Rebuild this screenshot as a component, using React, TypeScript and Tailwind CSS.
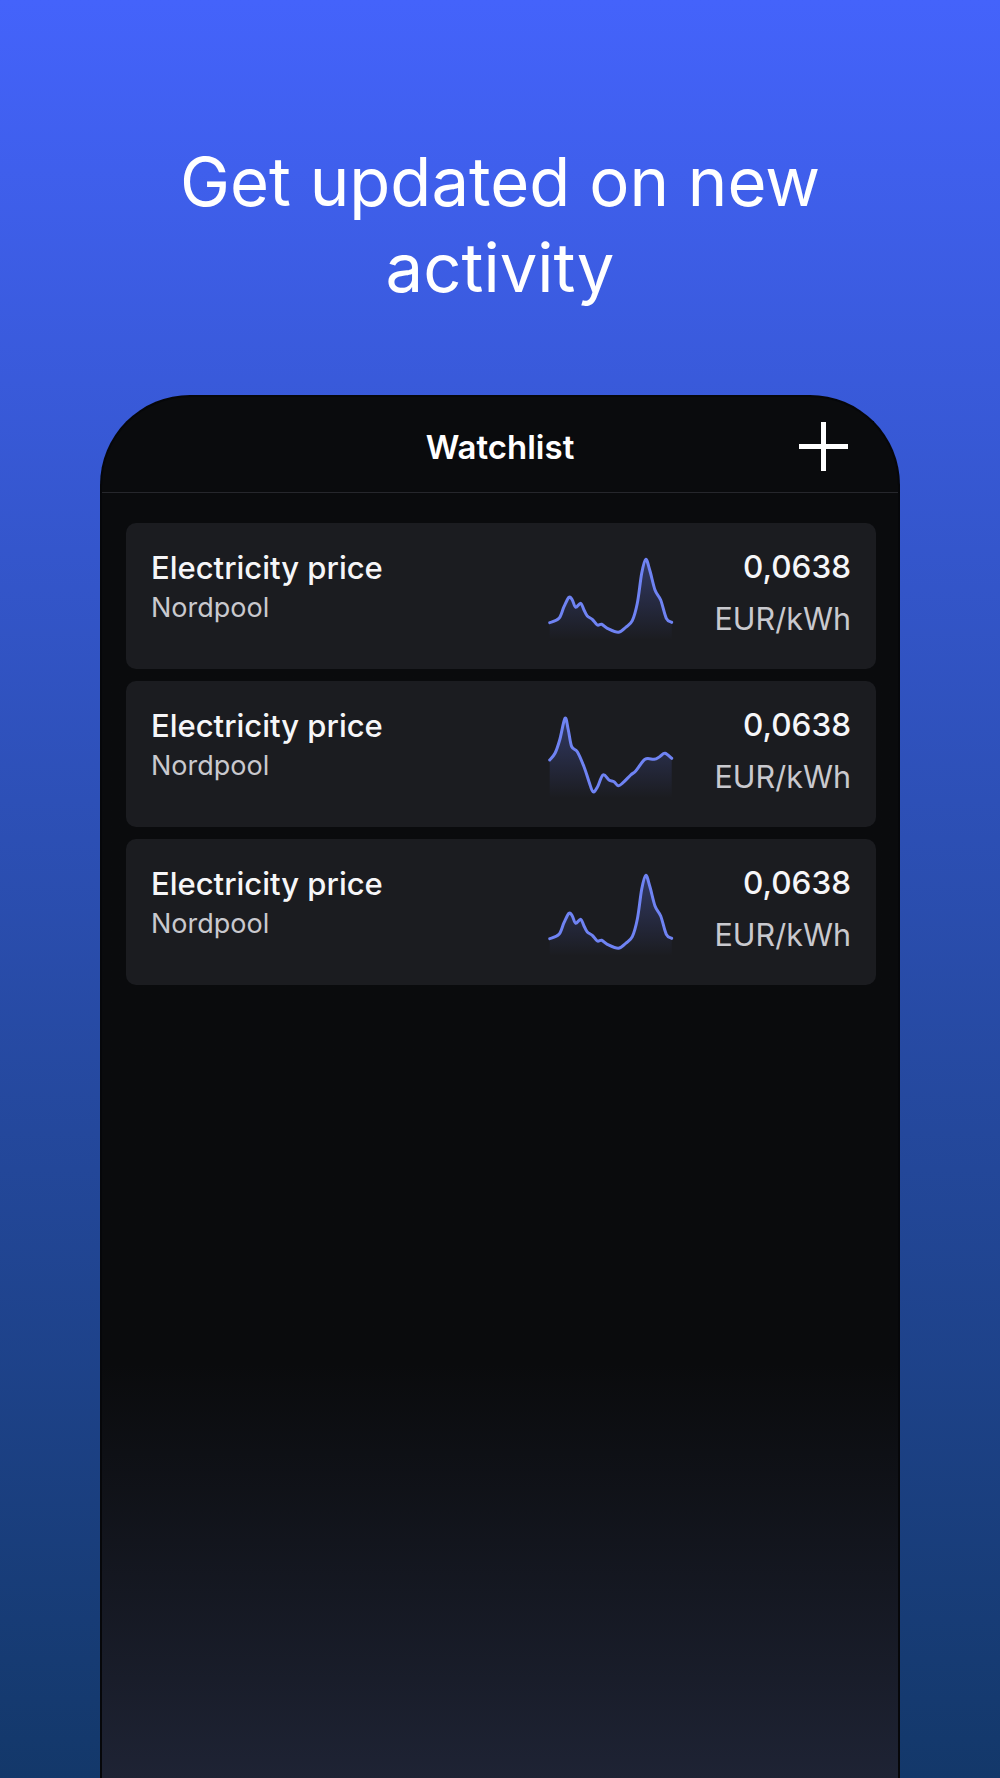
import React, { useId } from "react";

type Pt = [number, number];

const peakA: Pt[] = [
  [0.7, 67.7], [10, 63.3], [15, 51.7], [20, 42.3], [23.3, 45], [26.7, 52.3],
  [31.7, 48.3], [35, 55], [38.3, 61], [43.3, 64.3], [48.3, 70], [52.7, 69.3],
  [58.3, 73.3], [69.3, 77.3], [76.7, 72.3], [83.3, 65.7], [88.3, 48.3],
  [92.7, 18.3], [96.7, 4.3], [100.7, 15], [106, 35], [111.7, 45],
  [117.3, 63.3], [122.7, 67.3],
];

const peakB: Pt[] = [
  [0.7, 47], [6, 40.3], [10.7, 27], [16, 5.3], [19.3, 17], [22.7, 33.7],
  [28.3, 38.7], [35, 53.7], [40, 68.7], [44, 78.7], [48.3, 74.3], [54, 62],
  [60, 67], [65, 68.7], [69.3, 72.7], [74, 69.7], [81.7, 62], [86.7, 58],
  [96, 46.3], [105, 46.3], [110.7, 43.7], [116, 40.3], [122.7, 45.3],
];

// catmull-rom -> cubic bezier
const smooth = (pts: Pt[]) => {
  let d = `M${pts[0][0]},${pts[0][1]}`;
  for (let i = 0; i < pts.length - 1; i++) {
    const p0 = pts[i - 1] || pts[i];
    const p1 = pts[i];
    const p2 = pts[i + 1];
    const p3 = pts[i + 2] || p2;
    const c1x = p1[0] + (p2[0] - p0[0]) / 6;
    const c1y = p1[1] + (p2[1] - p0[1]) / 6;
    const c2x = p2[0] - (p3[0] - p1[0]) / 6;
    const c2y = p2[1] - (p3[1] - p1[1]) / 6;
    d += ` C${c1x.toFixed(1)},${c1y.toFixed(1)} ${c2x.toFixed(1)},${c2y.toFixed(1)} ${p2[0]},${p2[1]}`;
  }
  return d;
};

const Sparkline = ({ points }: { points: Pt[] }) => {
  const id = useId().replace(/:/g, "");
  const line = smooth(points);
  const last = points[points.length - 1];
  const area = `${line} L${last[0]},85 L${points[0][0]},85 Z`;
  return (
    <svg width="124" height="85" viewBox="0 0 124 85" className="shrink-0 overflow-visible">
      <defs>
        <linearGradient id={`g${id}`} x1="0" y1="0" x2="0" y2="1">
          <stop offset="0%" stopColor="#5a6ee0" stopOpacity="0.36" />
          <stop offset="100%" stopColor="#5a6ee0" stopOpacity="0" />
        </linearGradient>
      </defs>
      <path d={area} fill={`url(#g${id})`} />
      <path d={line} fill="none" stroke="#6f83f3" strokeWidth="3" strokeLinecap="round" strokeLinejoin="round" />
    </svg>
  );
};

const WatchCard = ({ points }: { points: Pt[] }) => (
  <div className="flex h-[146px] items-stretch rounded-[10px] bg-[#1b1c20] px-[25px]">
    <div className="flex-1 pt-[26px]">
      <div className="text-[31px] font-medium leading-[38px] text-[#f6f6f8]">Electricity price</div>
      <div className="mt-[5px] text-[27px] leading-[32px] text-[#c9c9ce]">Nordpool</div>
    </div>
    <div className="self-center pt-[2px]">
      <Sparkline points={points} />
    </div>
    <div className="ml-[38px] flex w-[140px] flex-col items-end pt-[25px]">
      <div className="text-[31.5px] font-medium leading-[38px] text-[#f6f6f8]">0,0638</div>
      <div className="mt-[14px] text-[30.5px] leading-[38px] text-[#c9c9ce]">EUR/kWh</div>
    </div>
  </div>
);

export default function App() {
  return (
    <div
      className="flex h-[1778px] w-full flex-col overflow-hidden bg-linear-to-b from-[#4463fb] to-[#13386a]"
      style={{ fontFamily: "Inter, 'Noto Sans', sans-serif" }}
    >
      <h1 className="pt-[139px] text-center text-[67px] font-normal leading-[86px] text-white">
        Get updated on new
        <br />
        activity
      </h1>

      <div className="mx-[100px] mt-[84px] flex flex-1 flex-col rounded-t-[90px] border-x-2 border-t-2 border-[#06070a] bg-linear-to-b from-[#0a0b0d] from-70% to-[#1e2334]">
        <div className="relative flex h-[96px] items-center justify-center border-b border-[#26272c]">
          <span className="mt-[7px] text-[33px] font-semibold text-white">Watchlist</span>
          <svg
            className="absolute right-[50px] top-[25px]"
            width="49"
            height="49"
            viewBox="0 0 49 49"
            fill="none"
          >
            <path d="M24.5 0V49M0 24.5H49" stroke="white" strokeWidth="5" />
          </svg>
        </div>

        <div className="flex flex-col gap-[12px] pl-[24px] pr-[22px] pt-[30px]">
          <WatchCard points={peakA} />
          <WatchCard points={peakB} />
          <WatchCard points={peakA} />
        </div>
      </div>
    </div>
  );
}
